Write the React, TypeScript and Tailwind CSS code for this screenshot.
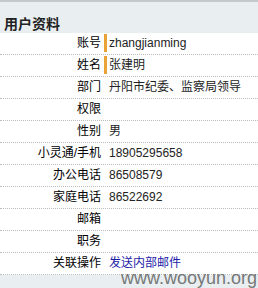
import React from 'react';

type Row = { label: string; value?: string; mark?: boolean; link?: boolean };

const rows: Row[] = [
    { label: '账号', value: 'zhangjianming', mark: true },
    { label: '姓名', value: '张建明', mark: true },
    { label: '部门', value: '丹阳市纪委、监察局领导' },
    { label: '权限' },
    { label: '性别', value: '男' },
    { label: '小灵通/手机', value: '18905295658' },
    { label: '办公电话', value: '86508579' },
    { label: '家庭电话', value: '86522692' },
    { label: '邮箱' },
    { label: '职务' },
    { label: '关联操作', value: '发送内部邮件', link: true },
];

export default function App() {
    return (
        <div className="relative w-[258px] h-[288px] overflow-hidden bg-white font-['Liberation_Sans','Noto_Sans_CJK_SC',sans-serif]">
            {/* 标题 */}
            <div className="h-[33px] border-t-2 border-[#c3cacd] bg-[#e9eff1] pl-[4px] pt-[14px]">
                <h2 className="text-[14px] leading-[16px] font-bold text-[#222]">用户资料</h2>
            </div>

            {/* 资料行 */}
            <div>
                {rows.map((row) => (
                    <div key={row.label} className="flex h-[22px] border-b border-dotted border-[#bdbdbd] text-[12px]">
                        <div className="w-[104px] shrink-0 pr-[3px] text-right leading-[21px] text-black">{row.label}</div>
                        <div
                            className={`mt-[1px] mb-[2px] flex items-center border-l-[3px] pl-[2px] ${row.mark ? 'border-[#e8a334]' : 'border-transparent'}`}
                        >
                            {row.link ? (
                                <a className="text-[#1c1ca8]">{row.value}</a>
                            ) : (
                                <span className="text-[#222]">{row.value}</span>
                            )}
                        </div>
                    </div>
                ))}
            </div>

            <div className="h-[20px] bg-[#e9eff1]" />

            {/* 水印 */}
            <div className="absolute right-[1px] bottom-[3px] text-[18px] leading-[13px] text-[#5a5a5a] opacity-80 font-['Liberation_Sans',sans-serif]">
                www.wooyun.org
            </div>
        </div>
    );
}
